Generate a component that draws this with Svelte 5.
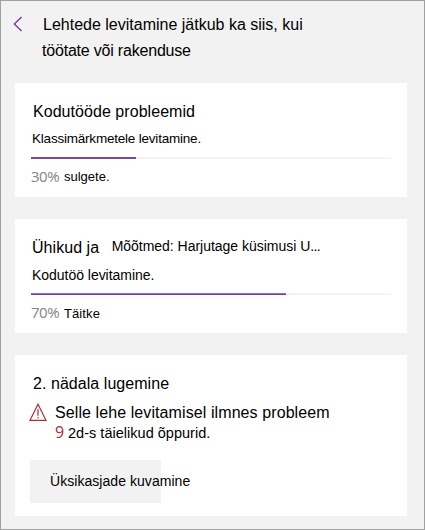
<script>
  const assignments = [
    { title: 'Kodutööde probleemid', status: 'Klassimärkmetele levitamine.', percent: 30, fill: 29.1, label: 'sulgete.' },
    { title: 'Ühikud ja', extra: 'Mõõtmed: Harjutage küsimusi U', status: 'Kodutöö levitamine.', percent: 70, fill: 70.8, label: 'Täitke' }
  ];
</script>

<main>
  <header>
    <svg class="back" width="10" height="16" viewBox="0 0 10 16" aria-hidden="true">
      <path d="M8.6 .9 L1.3 8 L8.6 15.1" />
    </svg>
    <h1><span class="h-one">Lehtede levitamine jätkub ka siis, kui</span><span class="h-two">töötate või rakenduse</span></h1>
  </header>

  {#each assignments as item, i}
    <section class="card item-{i}">
      <div class="heading">
        <h2>{item.title}</h2>
        {#if item.extra}<span class="extra">{item.extra}<span class="dots">...</span></span>{/if}
      </div>
      <p class="status">{item.status}</p>
      <div class="track"><div class="fill" style="width: {item.fill}%"></div></div>
      <div class="progress"><span class="percent">{item.percent}%</span><span class="label">{item.label}</span></div>
    </section>
  {/each}

  <section class="card problem">
    <h2>2. nädala lugemine</h2>
    <div class="alert">
      <svg width="18" height="18" viewBox="0 0 18 18" aria-hidden="true">
        <path d="M9 1.2 L17 17.3 H1 Z M9 6.2 V12.7 M9 14 V15.3" />
      </svg>
      <div class="message">
        <p class="error">Selle lehe levitamisel ilmnes probleem</p>
        <p class="learners"><span class="count">9</span><span class="who">2d-s täielikud õppurid.</span></p>
      </div>
    </div>
    <button>Üksikasjade kuvamine</button>
  </section>
</main>

<style>
  :global(body) { margin: 0; }
  * { box-sizing: border-box; }
  main {
    width: 425px;
    height: 530px;
    border: 1px solid #a0a0a0;
    background: #f2f2f2;
    color: #000;
    font-family: "Liberation Sans", Arial, sans-serif;
    padding: 14px 0 0 14px;
    overflow: hidden;
    white-space: nowrap;
  }
  h1, h2, p { margin: 0; font-weight: 400; }
  header { display: flex; height: 68px; }
  .back { margin: 1px 0 0 -2px; }
  .back path { fill: none; stroke: #8035ae; stroke-width: 1.4; }
  h1 { display: flex; flex-direction: column; font-size: 16px; line-height: 20px; margin-left: 20px; }
  .h-two { margin-top: 6px; margin-left: -1px; letter-spacing: -.2px; }
  .card { width: 392px; height: 114px; background: #fff; padding: 19px 16px 0; margin-bottom: 22px; }
  .heading { display: flex; height: 20px; }
  h2 { font-size: 16px; line-height: 20px; padding-left: 2px; letter-spacing: .05px; }
  .item-1 h2 { padding-left: 1px; }
  .extra { font-size: 14px; line-height: 16px; margin-left: 12.5px; letter-spacing: -.02px; }
  .dots { letter-spacing: -.7px; }
  .status { font-size: 13.5px; line-height: 18px; margin-top: 8px; padding-left: 1px; letter-spacing: -.21px; }
  .item-1 .status { font-size: 14px; letter-spacing: -.03px; }
  .track { width: 360px; height: 2px; margin-top: 9px; background: linear-gradient(#f8f8f8, #eee); }
  .fill { height: 2px; background: #764aa3; }
  .item-1 .fill { background: linear-gradient(#ab8cc8, #5a2391); }
  .progress { display: flex; height: 20px; margin-top: 8px; }
  .percent { width: 33px; margin-top: -1px; font: 15px/20px "Open Sans", sans-serif; letter-spacing: -.5px; color: #848484; }
  .label { font-size: 13px; line-height: 20px; }
  .item-1 .label { padding-top: 1px; letter-spacing: .1px; }
  .problem { height: 161px; margin: 0; }
  .alert { display: flex; height: 46px; margin-top: 7px; }
  .alert svg { margin: 2px 0 0 -2px; }
  .alert path { fill: none; stroke: #b22a32; stroke-width: 1.2; }
  .message { margin-left: 8px; padding-top: 1px; }
  .error { font-size: 16px; line-height: 22px; letter-spacing: .09px; }
  .learners { display: flex; font-size: 14.5px; line-height: 18px; letter-spacing: .02px; }
  .count { width: 13px; color: #b22a32; font: 16px/18px "Open Sans", sans-serif; letter-spacing: 0; margin-top: -1px; }
  button {
    display: block;
    width: 131px;
    height: 43px;
    margin: 13px 0 0 -1px;
    padding: 0 0 0 20px;
    border: 0;
    background: #f2f2f2;
    color: #000;
    font: 14px/43px "Liberation Sans", Arial, sans-serif;
    letter-spacing: .05px;
    text-align: left;
    white-space: nowrap;
  }
</style>
